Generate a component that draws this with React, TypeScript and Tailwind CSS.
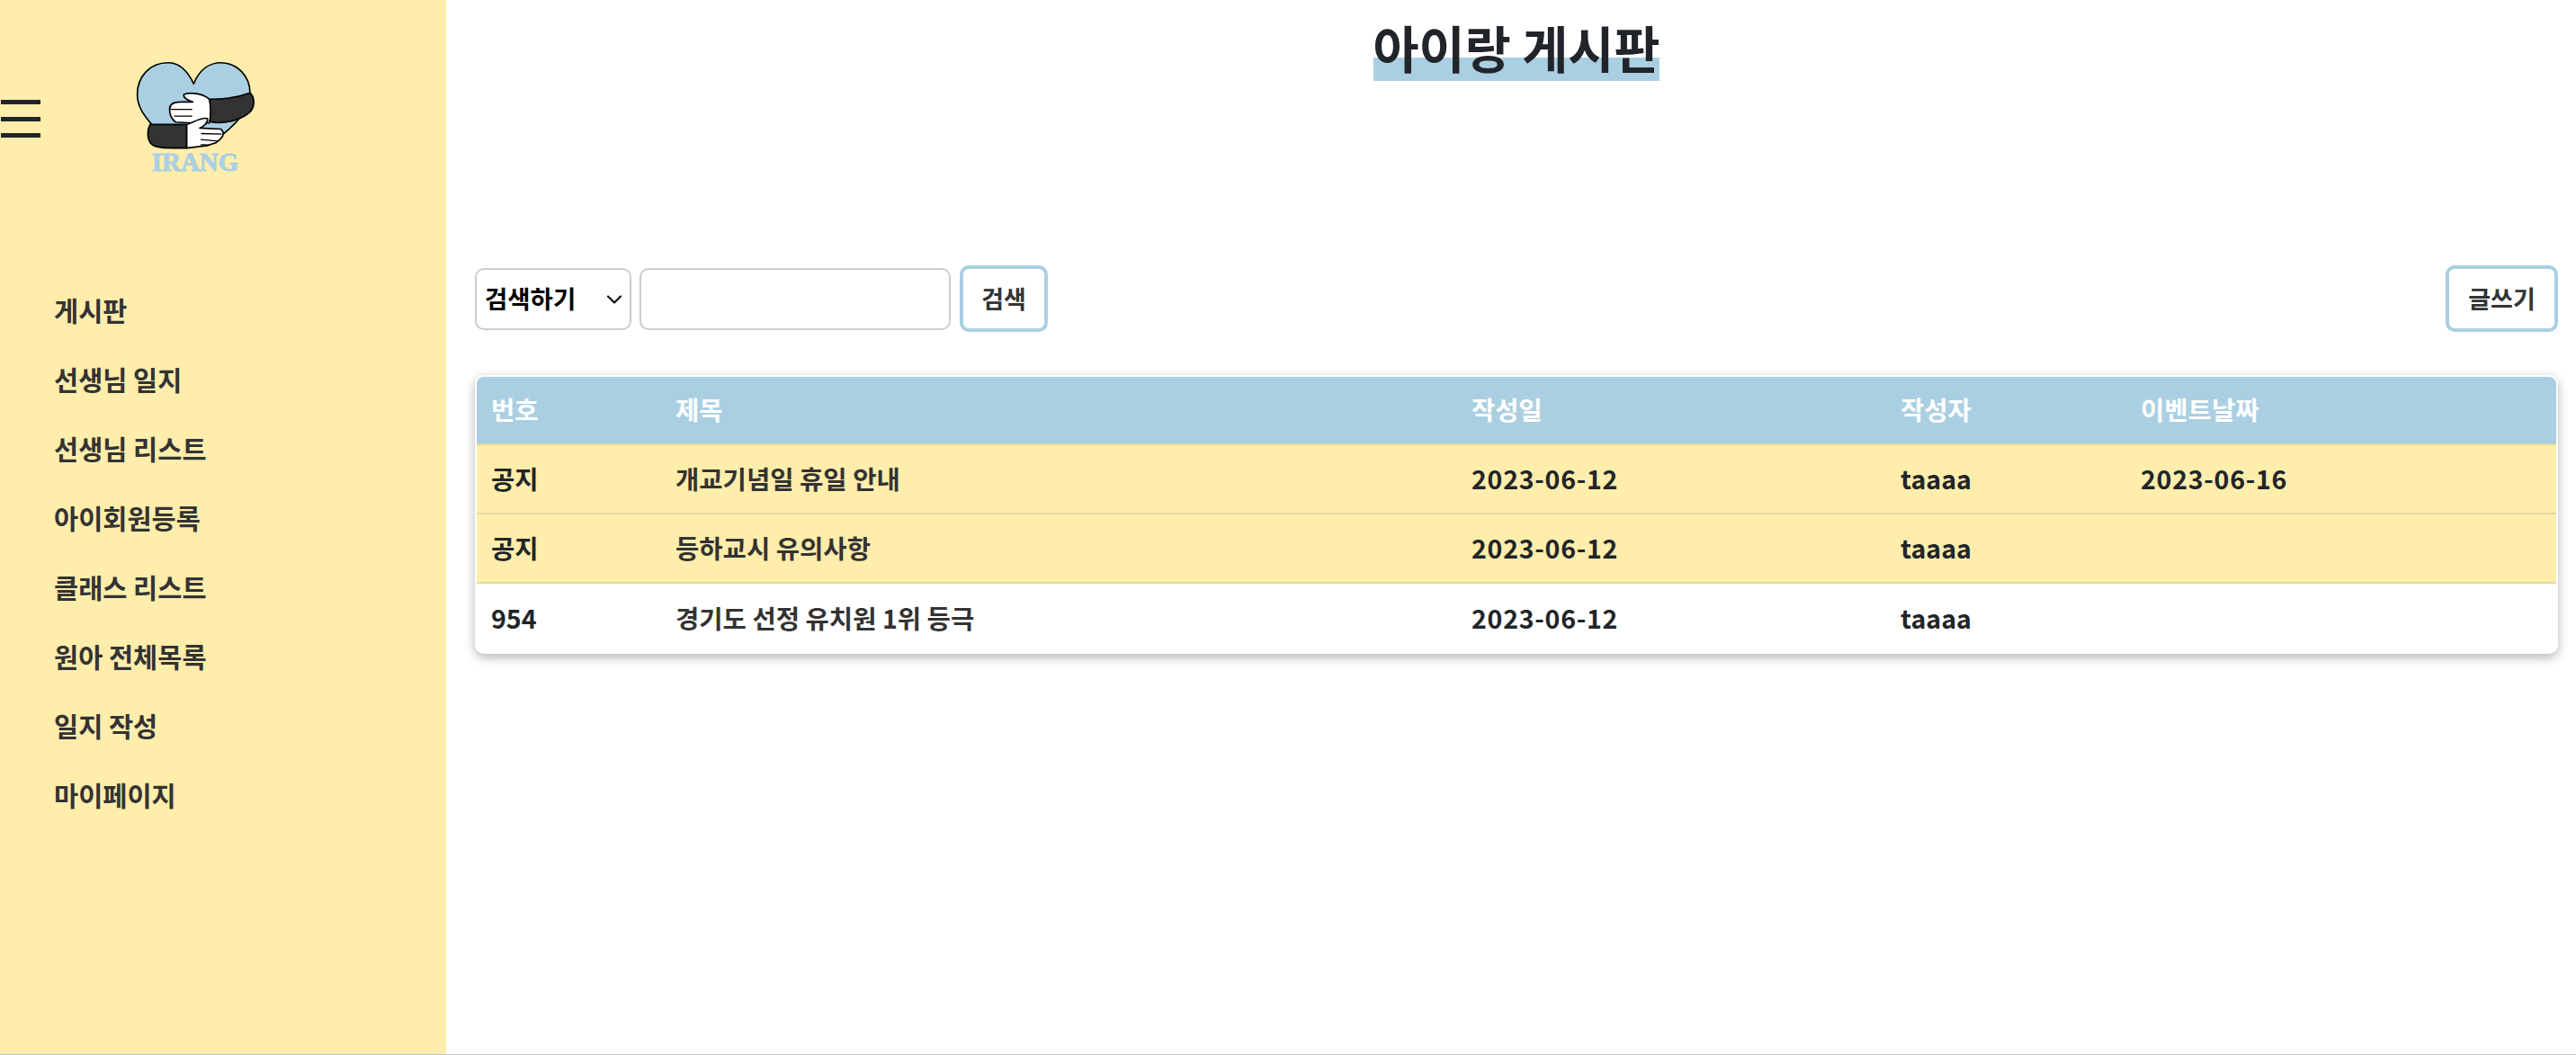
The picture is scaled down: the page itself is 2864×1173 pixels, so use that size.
import React from "react";
import { ChevronDown } from "lucide-react";

const menu = ["게시판", "선생님 일지", "선생님 리스트", "아이회원등록", "클래스 리스트", "원아 전체목록", "일지 작성", "마이페이지"];
const rows = [
  { no: "공지", title: "개교기념일 휴일 안내", date: "2023-06-12", author: "taaaa", ev: "2023-06-16", notice: true },
  { no: "공지", title: "등하교시 유의사항", date: "2023-06-12", author: "taaaa", ev: "", notice: true },
  { no: "954", title: "경기도 선정 유치원 1위 등극", date: "2023-06-12", author: "taaaa", ev: "", notice: false },
];

function Logo() {
  return (
    <svg width="134" height="99" viewBox="450 80 400 295" className="block">
      <path d="M645 155C622 105 592 85 560 85C500 85 458 130 458 190C458 235 485 265 510 295L640 365L745 320C790 285 832 235 832 185C832 130 790 85 735 85C700 85 665 105 645 155Z" fill="#abcfe2" stroke="#000" strokeWidth="5" strokeLinejoin="round" />
      <path d="M698 206C750 206 800 197 832 185C846 197 850 225 835 245C810 272 750 292 698 280Z" fill="#333" stroke="#000" strokeWidth="5" strokeLinejoin="round" />
      <path d="M612 190C640 180 680 190 697 206C702 230 702 260 697 285L640 285L585 282C572 272 565 255 565 240C565 225 575 215 600 215L642 215C625 210 610 202 612 190Z" fill="#fff" stroke="#000" strokeWidth="5" strokeLinejoin="round" />
      <path d="M568 240L640 240M580 262L640 262" stroke="#000" strokeWidth="4" fill="none" />
      <path d="M622 290L500 290C490 310 490 340 505 355C520 370 560 368 622 368Z" fill="#333" stroke="#000" strokeWidth="5" strokeLinejoin="round" />
      <path d="M622 290C640 285 670 265 690 270C695 282 680 295 665 302L735 305C746 315 746 325 735 337L720 350L690 360L622 368Z" fill="#fff" stroke="#000" strokeWidth="5" strokeLinejoin="round" />
      <path d="M670 320L738 322M668 340L725 345M668 357L695 358" stroke="#000" strokeWidth="4" fill="none" />
    </svg>
  );
}

export default function App() {
  return (
    <div className="flex h-[1173px] w-[2864px] overflow-hidden border-b border-b-[#c4c4c4] bg-white font-['Noto_Sans_CJK_KR','Noto_Sans',sans-serif] text-[#212529]">
      <aside className="w-[496px] shrink-0 bg-[#ffedab]">
        <div className="flex h-[198px] pt-[68px]">
          <div className="ml-px mt-[43px] flex h-[42px] w-[44px] flex-col justify-between">
            <span className="h-[5px] bg-[#212529]" />
            <span className="h-[5px] bg-[#212529]" />
            <span className="h-[5px] bg-[#212529]" />
          </div>
          <div className="ml-[105px] flex flex-col items-center">
            <Logo />
            <span className="-mt-[2px] font-['Liberation_Serif',serif] text-[29px] font-bold leading-[30px] text-[#abcfe2] [-webkit-text-stroke:1px_#abcfe2]">IRANG</span>
          </div>
        </div>
        <ul className="mt-[108px] flex flex-col pl-[60px] text-[29.5px] font-semibold">
          {menu.map((m) => (
            <li key={m} className="flex h-[77px] items-center text-[#333]">{m}</li>
          ))}
        </ul>
      </aside>
      <main className="flex min-w-0 flex-1 flex-col pl-[32px] pr-[20px]">
        <div className="flex justify-center">
          <h1 className="mt-[14px] bg-[linear-gradient(transparent_66%,#abcfe2_66%)] text-[55.5px] font-bold leading-[76px]">아이랑 게시판</h1>
        </div>
        <div className="mt-[205px] flex items-center justify-between">
          <div className="flex items-center gap-[9px]">
            <div className="relative">
              <select className="block h-[69px] w-[174px] appearance-none rounded-[10px] border-2 border-[#cccccc] bg-white pl-[9px] text-[27.5px] font-bold text-black outline-none">
                <option>검색하기</option>
              </select>
              <ChevronDown className="pointer-events-none absolute right-[5px] top-[21px] text-black" size={28} strokeWidth={1.8} />
            </div>
            <input className="h-[69px] w-[346px] rounded-[10px] border-2 border-[#cccccc] bg-white outline-none" />
            <button className="ml-[1px] h-[74px] w-[98px] rounded-[10px] border-[4px] border-[#abcfe2] bg-white text-[27px] font-semibold text-[#333]">검색</button>
          </div>
          <button className="h-[74px] w-[125px] rounded-[10px] border-[4px] border-[#abcfe2] bg-white text-[27px] font-semibold text-[#333]">글쓰기</button>
        </div>
        <div className="mt-[48px] overflow-hidden rounded-[10px] border-2 border-white bg-white shadow-[0_4px_12px_rgba(0,0,0,0.3)]">
          <table className="w-full table-fixed border-collapse text-[28.6px] font-semibold">
            <colgroup>
              <col className="w-[205px]" />
              <col className="w-[885px]" />
              <col className="w-[477px]" />
              <col className="w-[267px]" />
              <col />
            </colgroup>
            <thead>
              <tr className="h-[75px] bg-[#abcfe2] text-left text-white">
                {["번호", "제목", "작성일", "작성자", "이벤트날짜"].map((h) => (
                  <th key={h} className="pl-[16px] pb-[2px] font-semibold">{h}</th>
                ))}
              </tr>
            </thead>
            <tbody>
              {rows.map((r, i) => (
                <tr key={i} className={r.notice ? "h-[77px] border-t-2 border-t-[#e3d89e] bg-[#ffedab] text-[#212529]" : "h-[77px] border-t-2 border-t-[#e3d89e] bg-white text-[#212529]"}>
                  <td className="pl-[16px]">{r.no}</td>
                  <td className="pl-[16px] text-[#333]">{r.title}</td>
                  <td className="pl-[16px] tracking-[0.7px]">{r.date}</td>
                  <td className="pl-[16px]">{r.author}</td>
                  <td className="pl-[16px] tracking-[0.7px]">{r.ev}</td>
                </tr>
              ))}
            </tbody>
          </table>
        </div>
      </main>
    </div>
  );
}
